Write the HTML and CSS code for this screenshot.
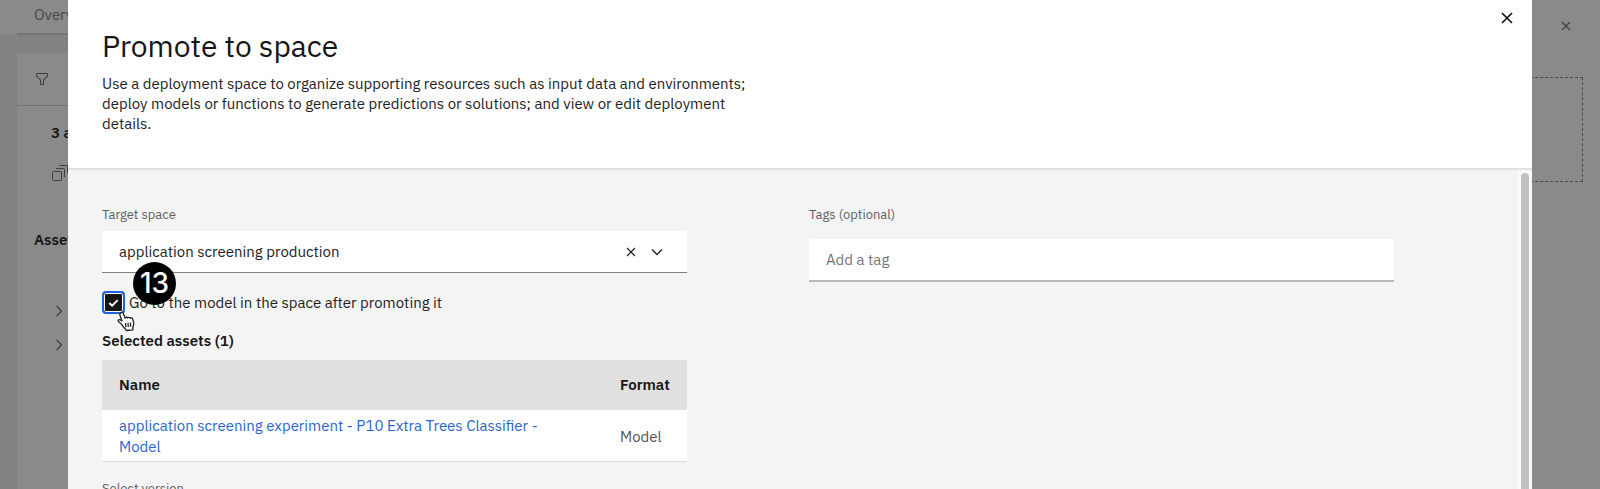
FILE: index.html
```html
<!DOCTYPE html>
<html lang="en">
<head>
<meta charset="utf-8">
<title>Promote to space</title>
<link rel="stylesheet" href="styles.css">
</head>
<body>
<div class="project">
  <div class="project-main">
    <nav class="tabs"><a class="tab" href="#overview">Overview</a></nav>
    <section class="assets">
      <div class="assets-toolbar">
        <button class="icon-button" type="button" aria-label="Filter">
          <svg width="16" height="16" viewBox="0 0 32 32" fill="currentColor"><path d="M18 28h-4a2 2 0 0 1-2-2v-7.6L4.600 11A2 2 0 0 1 4 9.600V6a2 2 0 0 1 2-2h20a2 2 0 0 1 2 2v3.600a2 2 0 0 1-.6 1.400L20 18.400V26a2 2 0 0 1-2 2zM6 6v3.600l8 8V26h4v-8.400l8-8V6z"/></svg>
        </button>
      </div>
      <div class="assets-count">3 assets</div>
      <a class="all-assets" href="#all">
        <svg width="17" height="17" viewBox="0 0 17 17" fill="none" stroke="currentColor"><rect x="1.500" y="6.500" width="9" height="9" rx="1"/><path d="M5 3.500h7.500a1 1 0 0 1 1 1V12M8.500.500H16a.5.500 0 0 1 .5.500v7.500"/></svg>
        <span>All assets</span>
      </a>
      <h2 class="types-title">Asset types</h2>
      <ul class="types">
        <li><button class="type" type="button"><svg width="16" height="16" viewBox="0 0 16 16" fill="none" stroke="currentColor" stroke-width="1.200"><path d="M5.500 3l5 5-5 5"/></svg>Data</button></li>
        <li><button class="type" type="button"><svg width="16" height="16" viewBox="0 0 16 16" fill="none" stroke="currentColor" stroke-width="1.200"><path d="M5.500 3l5 5-5 5"/></svg>Experiments</button></li>
      </ul>
    </section>
  </div>
  <aside class="side">
    <button class="icon-button side-close" type="button" aria-label="Close panel">
      <svg width="16" height="16" viewBox="0 0 16 16" fill="none" stroke="currentColor" stroke-width="1.200"><path d="M4 4l8 8M12 4l-8 8"/></svg>
    </button>
    <div class="dropzone"></div>
  </aside>
</div>
<div class="overlay">
  <div class="modal" role="dialog" aria-modal="true" aria-labelledby="modal-title">
    <header class="modal-header">
      <div>
        <h1 class="modal-title" id="modal-title">Promote to space</h1>
        <p class="modal-text">Use a deployment space to organize supporting resources such as input data and environments; deploy models or functions to generate predictions or solutions; and view or edit deployment details.</p>
      </div>
      <button class="icon-button modal-close" type="button" aria-label="Close">
        <svg width="20" height="20" viewBox="0 0 20 20" fill="none" stroke="currentColor" stroke-width="1.700"><path d="M5 5l10 10M15 5L5 15"/></svg>
      </button>
    </header>
    <div class="modal-body">
      <form class="form">
        <div class="column">
          <label class="label" for="space">Target space</label>
          <div class="combo">
            <input class="combo-input" id="space" type="text" value="application screening production">
            <button class="icon-button" type="button" aria-label="Clear selection">
              <svg width="16" height="16" viewBox="0 0 16 16" fill="none" stroke="currentColor" stroke-width="1.200"><path d="M4 4l8 8M12 4l-8 8"/></svg>
            </button>
            <button class="icon-button" type="button" aria-label="Open list">
              <svg width="16" height="16" viewBox="0 0 16 16" fill="none" stroke="currentColor" stroke-width="1.400"><path d="M3 5.500l5 5 5-5"/></svg>
            </button>
          </div>
          <div class="check-row">
            <input class="check" id="go" type="checkbox" checked>
            <label for="go">Go to the model in the space after promoting it</label>
            <span class="step">13</span>
            <svg class="pointer" width="20" height="22" viewBox="0 0 20 22" fill="#fff" stroke="#222" stroke-width="1.300" stroke-linejoin="round"><path d="M3.500 2.200c.8-1.300 2.300-1.100 2.800.2l1.900 4.800c.2-1.100 2-1.400 2.500-.2.500-1 2.100-.9 2.500.3.900-.8 2.200-.4 2.500.7l.9 3.300c.5 2-.2 3.600-.8 5.200l.2 2.300-6.800.7-.9-1.700c-1.300-.9-2.500-2.500-3.300-3.900-.8-1.300-2.100-2.200-3.400-3.200-1-.9-.1-2.400 1.300-1.900l2 1.200-2-6c-.2-.7 0-1.300.6-1.800z"/><path d="M8.500 12l.4 4.200M11 11.800l.3 4.200M13.500 11.600l.1 4.200" fill="none"/></svg>
          </div>
          <h2 class="section-title">Selected assets (1)</h2>
          <table class="table">
            <thead><tr><th>Name</th><th class="format">Format</th></tr></thead>
            <tbody><tr><td class="name"><a class="link" href="#model">application screening experiment - P10 Extra Trees Classifier - Model</a></td><td class="format">Model</td></tr></tbody>
          </table>
          <label class="label version" for="version">Select version</label>
          <select class="version-select" id="version"><option>Current</option></select>
        </div>
        <div class="column">
          <label class="label" for="tags">Tags (optional)</label>
          <input class="tag-input" id="tags" type="text" placeholder="Add a tag">
        </div>
      </form>
      <div class="scrollbar"><div class="thumb"></div></div>
    </div>
  </div>
</div>
</body>
</html>
```
FILE: styles.css
```css
* { box-sizing: border-box; }
html, body { height: 100%; }
body {
  margin: 0;
  overflow: hidden;
  background: #828282;
  color: #222;
  font: 15px/20px "IBM Plex Sans", Roboto, "Noto Sans", sans-serif;
}
h1, h2, p, ul { margin: 0; padding: 0; }
input, button, select { font: inherit; color: inherit; }
svg { display: block; flex: none; }
.icon-button { display: flex; padding: 0; border: 0; background: none; }

.project { display: flex; height: 100%; color: #3e3e3e; }
.project-main { display: flex; flex-direction: column; flex: 1; }
.tabs { height: 35px; padding-left: 17px; background: #8a8a8a; }
.tab {
  display: block;
  height: 35px;
  padding: 5px 17px;
  border-bottom: 2px solid #767676;
  color: #484848;
  text-decoration: none;
}
.assets { flex: 1; margin: 19px 0 0 17px; background: #8a8a8a; }
.assets-toolbar { padding: 17px 17px 18px; border-bottom: 1px solid #747474; }
.assets-count, .types-title { color: #161616; font-size: 15px; font-weight: 600; }
.assets-count { padding: 17px 34px 0; }
.all-assets { display: flex; gap: 8px; padding: 22px 34px 0; color: inherit; text-decoration: none; }
.types-title { padding: 45px 17px 0; }
.types { padding: 51px 34px 0; list-style: none; }
.type { display: flex; align-items: center; gap: 8px; height: 20px; margin-bottom: 14px; padding: 0; border: 0; background: none; }
.side { width: 320px; padding: 18px 17px; background: #8a8a8a; }
.side-close { margin: 0 9px 43px auto; }
.dropzone { height: 105px; border: 1px dashed #4a4a4a; }

.overlay { position: fixed; inset: 0; display: flex; justify-content: center; }
.modal { display: flex; flex-direction: column; width: 91.5%; background: #fff; }
.modal-header {
  display: flex;
  justify-content: space-between;
  padding: 26px 15px 34px 34px;
  border-bottom: 2px solid #e0e0e0;
}
.modal-title { margin-bottom: 8px; font-size: 30px; font-weight: 400; line-height: 40px; color: #161616; }
.modal-text { max-width: 660px; }
.modal-close { align-self: flex-start; margin-top: -18px; color: #161616; }
.modal-body { display: flex; flex: 1; min-height: 0; overflow: hidden; background: #f4f4f4; }
.form { display: grid; grid-template-columns: 1fr 1fr; gap: 122px; flex: 1; padding: 35px 122px 0 34px; }
.label { display: block; font-size: 13px; color: #606060; }
.combo {
  display: flex;
  align-items: center;
  gap: 10px;
  height: 42px;
  margin-top: 6px;
  padding: 0 22px 0 17px;
  border-bottom: 1px solid #808080;
  background: #fff;
}
.combo-input { flex: 1; min-width: 0; padding: 0; border: 0; outline: 0; background: none; }
.check-row { position: relative; display: flex; align-items: center; gap: 4px; height: 23px; margin-top: 18px; }
.check {
  appearance: none;
  width: 23px;
  height: 23px;
  margin: 0;
  border: 2px solid #1f62e0;
  border-radius: 4px;
  background: #161616 url("data:image/svg+xml,%3Csvg xmlns='http://www.w3.org/2000/svg' viewBox='0 0 16 16'%3E%3Cpath d='M3.500 8.500l3 3 6-6' fill='none' stroke='white' stroke-width='2'/%3E%3C/svg%3E") center / 15px no-repeat;
  box-shadow: inset 0 0 0 1px #fff;
}
.step {
  position: absolute;
  left: 31px;
  top: -29px;
  width: 43px;
  height: 43px;
  border-radius: 50%;
  background: #000;
  color: #fff;
  font: 500 28px/43px Inter, "Liberation Sans", sans-serif;
  text-align: center;
}
.pointer { position: absolute; left: 15px; top: 20px; }
.section-title { margin-top: 17px; font-size: 15px; font-weight: 600; line-height: 20px; color: #161616; }
.table { width: 100%; margin-top: 9px; border-collapse: collapse; text-align: left; }
.table th { height: 50px; padding: 0 17px; background: #e0e0e0; color: #161616; font-weight: 600; }
.table td { height: 51px; padding: 5px 17px 4px; border-bottom: 1px solid #dcdcdc; background: #fff; color: #525252; line-height: 21px; }
.table .format { width: 84px; }
.table .name { padding-right: 34px; }
.link { color: #2864d2; text-decoration: none; }
.version { margin-top: 17px; }
.version-select { width: 100%; height: 42px; border: 0; background: #fff; }
.tag-input {
  width: 100%;
  height: 43px;
  margin-top: 14px;
  padding: 0 17px;
  border: 0;
  border-bottom: 2px solid #b8b8b8;
  background: #fff;
}
.tag-input::placeholder { color: #757575; }
.scrollbar { width: 16px; padding: 3px 3px 0 4px; border-left: 1px solid #ededed; background: #fafafa; }
.thumb { height: 100%; border-radius: 4px 4px 0 0; background: #c1c1c1; }
```
